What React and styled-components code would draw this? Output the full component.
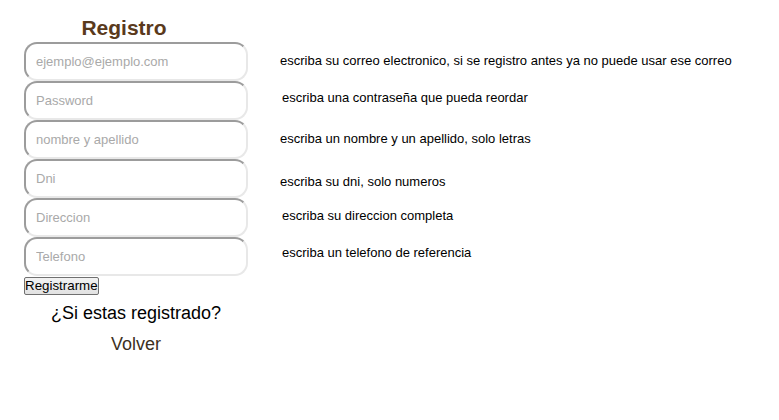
import React from "react";
import styled, { createGlobalStyle } from "styled-components";

const Global = createGlobalStyle`
  html, body { margin: 0; padding: 0; background: #ffffff; }
  body { font-family: "Liberation Sans", Arial, sans-serif; color: #000; }
`;

const Page = styled.div`
  width: 779px;
  height: 420px;
  padding: 16px 0 0 24px;
  box-sizing: border-box;
`;

const Column = styled.div`
  display: flex;
  flex-direction: column;
`;

const Title = styled.h1`
  margin: 0 0 2px 0;
  width: 200px;
  text-align: center;
  font-size: 21px;
  line-height: 24px;
  font-weight: bold;
  color: #5a3a1c;
`;

const Row = styled.div`
  display: flex;
  align-items: flex-start;
  height: 39px;
`;

const Field = styled.input`
  box-sizing: border-box;
  width: 224px;
  height: 39px;
  margin: 0;
  padding: 0 10px;
  border: 2px solid;
  border-color: #9c9c9c #e8e8e8 #e8e8e8 #9c9c9c;
  border-radius: 13px;
  font-family: "Liberation Sans", Arial, sans-serif;
  font-size: 13px;
  color: #333;
  background: #fff;
  outline: none;
  &::placeholder { color: #a9a9a9; }
`;

const Hint = styled.span`
  margin-left: ${(p) => 32 + (p.$indent || 0)}px;
  padding-top: ${(p) => p.$top}px;
  font-size: 13px;
  line-height: 14px;
  white-space: nowrap;
  color: #000;
`;

const Submit = styled.button`
  align-self: flex-start;
  margin-top: 1px;
  height: 18px;
  padding: 0;
  border: 1px solid #707070;
  border-radius: 2px;
  background: linear-gradient(#f2f2f2, #e2e2e2);
  font-family: "Liberation Sans", Arial, sans-serif;
  font-size: 13.33px;
  line-height: 14px;
  color: #000;
`;

const Footer = styled.div`
  width: 224px;
  display: flex;
  flex-direction: column;
  align-items: center;
`;

const Question = styled.p`
  margin: 8px 0 0;
  font-size: 18px;
  line-height: 21px;
  color: #000;
`;

const Back = styled.a`
  margin-top: 10px;
  font-size: 18px;
  line-height: 21px;
  color: #3d3022;
  text-decoration: none;
`;

const fields = [
  { ph: "ejemplo@ejemplo.com", type: "text", hint: "escriba su correo electronico, si se registro antes ya no puede usar ese correo", top: 12, indent: 0 },
  { ph: "Password", type: "password", hint: "escriba una contraseña que pueda reordar", top: 10, indent: 2 },
  { ph: "nombre y apellido", type: "text", hint: "escriba un nombre y un apellido, solo letras", top: 12, indent: 0 },
  { ph: "Dni", type: "text", hint: "escriba su dni, solo numeros", top: 16, indent: 0 },
  { ph: "Direccion", type: "text", hint: "escriba su direccion completa", top: 11, indent: 2 },
  { ph: "Telefono", type: "text", hint: "escriba un telefono de referencia", top: 9, indent: 2 },
];

export default function App() {
  return (
    <>
      <Global />
      <Page>
        <Column>
          <Title>Registro</Title>
          {fields.map((f) => (
            <Row key={f.ph}>
              <Field type={f.type} placeholder={f.ph} />
              <Hint $top={f.top} $indent={f.indent}>{f.hint}</Hint>
            </Row>
          ))}
          <Submit type="submit">Registrarme</Submit>
          <Footer>
            <Question>¿Si estas registrado?</Question>
            <Back href="#">Volver</Back>
          </Footer>
        </Column>
      </Page>
    </>
  );
}
